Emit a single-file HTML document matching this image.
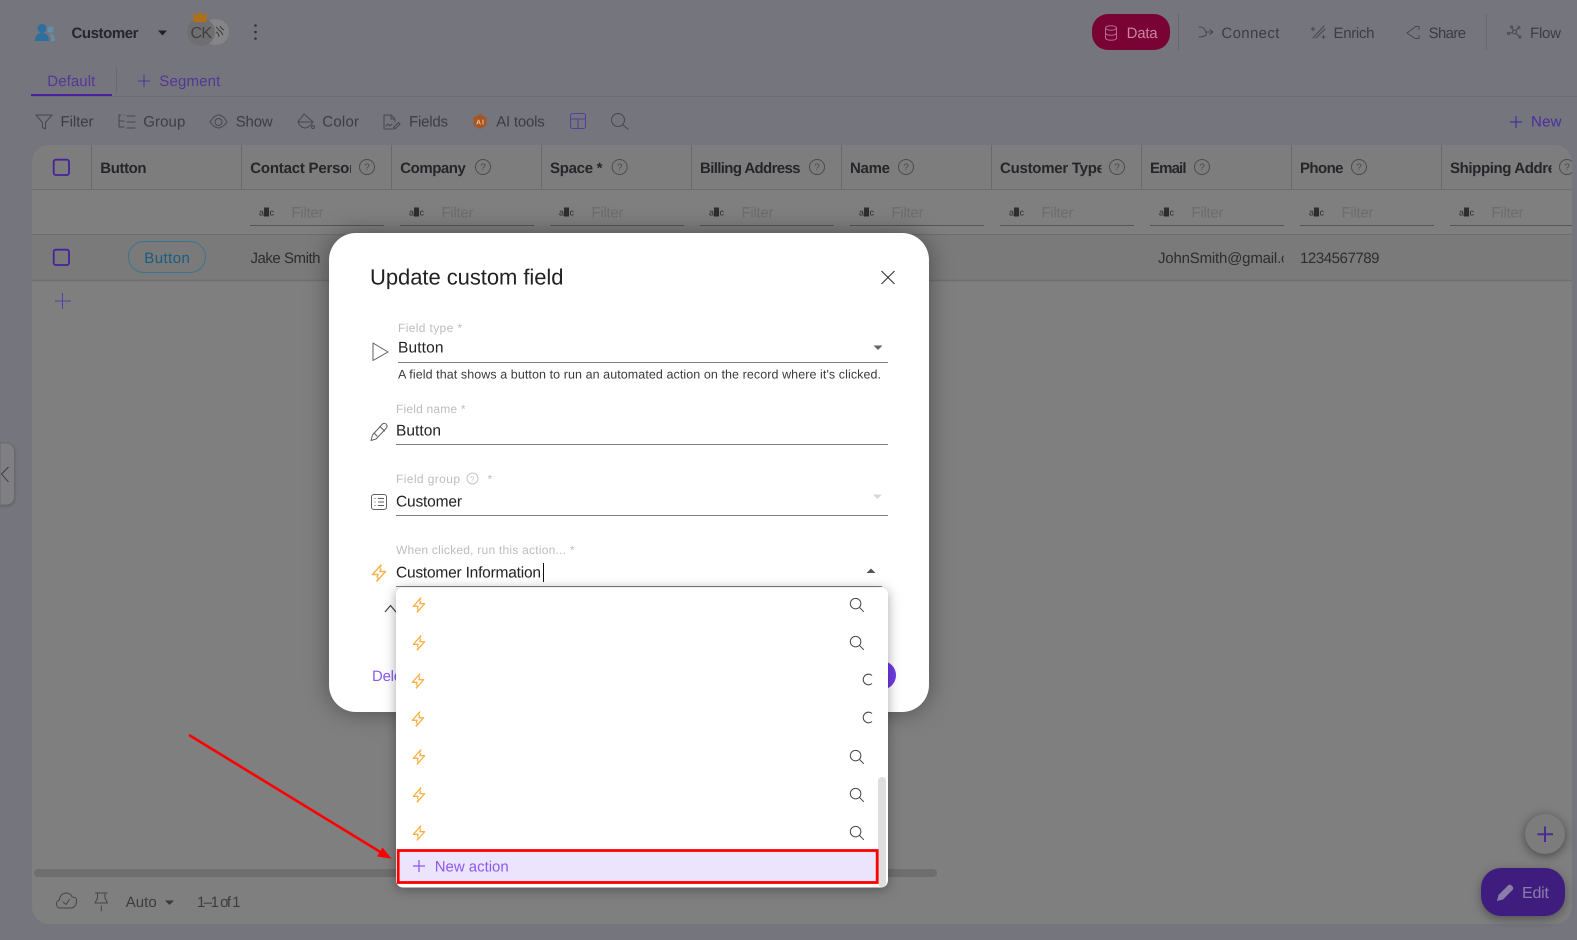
<!DOCTYPE html>
<html lang="en">
<head>
<meta charset="utf-8">
<title>Update custom field</title>
<style>
html,body{margin:0;padding:0;width:1577px;height:940px;overflow:hidden;background:#75757d}
svg{display:block}
text{font-family:"Liberation Sans",sans-serif;font-size:15px;fill:#3c3c41;text-rendering:geometricPrecision}
.b{font-weight:bold;fill:#26262a}
.f{fill:#6d6d6d}
.abc{font-size:9px;fill:#2a2a2a}
.l{font-size:12px;fill:#bdbdbd}
.v{fill:#222;font-size:15.500px}
.ic{fill:none;stroke:#47474c;stroke-width:1;stroke-linecap:round;stroke-linejoin:round}
.mi{fill:none;stroke:#5f5f5f;stroke-width:1;stroke-linecap:round;stroke-linejoin:round}
.h{fill:none;stroke:#4c4c50;stroke-width:1}
.ht{font-size:10px;fill:#4c4c50}
.bolt{fill:none;stroke:#f9b34c;stroke-width:1.500;stroke-linejoin:round;stroke-linecap:round}
</style>
</head>
<body>
<svg width="1577" height="940" viewBox="0 0 1577 940" xmlns="http://www.w3.org/2000/svg">
<defs>
<clipPath id="tb"><rect x="32" y="145" width="1540" height="779" rx="17"/></clipPath>
<symbol id="bolt" viewBox="0 0 16 18" overflow="visible"><path class="bolt" d="M10 1 1.500 10.500H7L6.200 13M6 17 14.500 7.500H9L9.800 5M10 1 8.700 3.800M6 17 7.300 14.200"/></symbol>
<symbol id="q" viewBox="0 0 16 16" overflow="visible"><circle cx="6.500" cy="6.500" r="5.600" fill="none" stroke="#4a4a4a" stroke-width="1.100"/><path d="M10.700 10.700 15 15" stroke="#4a4a4a" stroke-width="1.100" stroke-linecap="round"/></symbol>
</defs>

<!-- page background -->
<rect width="1577" height="940" fill="#75757d"/>

<!-- top bar -->
<circle cx="42" cy="28.500" r="4.500" fill="#2d6f9f"/><path d="M35 41c0-6 3-8 7-8s7 2 7 8z" fill="#2d6f9f"/>
<circle cx="50.500" cy="29.500" r="3.300" fill="#668ca8"/><path d="M50 34c3.500 0 5 2 5 7h-4c0-3-.5-5-1-7z" fill="#668ca8"/>
<text class="b" x="71.500" y="38" textLength="67" lengthAdjust="spacing">Customer</text>
<path d="M158 30.500h9l-4.500 5z" fill="#222"/>
<circle cx="216" cy="32" r="13" fill="#858587"/>
<circle cx="201" cy="32" r="14" fill="#6f6f72"/>
<text x="190.500" y="38" textLength="21.500" style="fill:#3f3f42;font-size:16px">CK</text>
<path d="M216 27c2 1 2 3 4 4s2 3 3 4M220 26c1 2 2 3 4 4M216 32c2 1 3 2 3 5" fill="none" stroke="#3f3f42" stroke-width="1.100"/>
<path d="M194 22l-1.500-9.500 4 3.500 3.500-5 3.500 5 4-3.500-1.500 9.500z" fill="#b0701a"/>
<circle cx="255.500" cy="25.500" r="1.300" fill="#333"/><circle cx="255.500" cy="32" r="1.300" fill="#333"/><circle cx="255.500" cy="38.500" r="1.300" fill="#333"/>

<rect x="1092" y="14" width="78" height="36" rx="16" fill="#7a0336"/>
<g fill="none" stroke="#b56c8c" stroke-width="1"><ellipse cx="1111" cy="28" rx="5.500" ry="2.200"/><path d="M1105.500 28v10c0 3 11 3 11 0V28M1105.500 33c0 3 11 3 11 0"/></g>
<text x="1126.600" y="38" textLength="31" style="fill:#c9859f">Data</text>
<path d="M1178.500 14v36M1486.500 14v36" stroke="#68686f"/>
<path class="ic" d="M1199 27c4 0 5 1 6 3 1 3 2 4 1 5-1 1-4 2-7 2M1206 32h7M1210 29.500l3 2.500-3 2.500" />
<text x="1221.400" y="38" textLength="58">Connect</text>
<path class="ic" d="M1313 38l11-12M1316 38l9-9M1311 29h4M1313 27v4M1322 37h3M1323.500 35.500v3"/>
<text x="1333.500" y="38" textLength="41">Enrich</text>
<path class="ic" d="M1407 33l8-6M1407 33l8 5.500M1415 26.500h4v3M1415 38.500h4v-3"/>
<text x="1428.600" y="38" textLength="37.500">Share</text>
<g class="ic"><circle cx="1514.500" cy="32" r="2"/><circle cx="1508.500" cy="33.500" r="1"/><circle cx="1511.500" cy="27" r="1"/><circle cx="1519" cy="27.500" r="1"/><circle cx="1520" cy="37" r="1"/><path d="M1509.500 33.300l3-.8M1512 28l1.500 2.500M1518.300 28.300l-2.500 2.300M1516 33.500l3.300 3"/></g>
<text x="1530" y="38" textLength="31">Flow</text>

<!-- tabs -->
<text x="47.300" y="86" textLength="48" style="fill:#553699">Default</text>
<rect x="31" y="94" width="81" height="2" fill="#48229a"/>
<path d="M116.500 68v24" stroke="#68686f"/>
<path d="M32 96.500H1577" stroke="#6c6c73"/>
<path d="M144 75v12M138 81h12" stroke="#553699" stroke-width="1.100"/>
<text x="159.300" y="86" textLength="61" style="fill:#553699">Segment</text>

<!-- toolbar -->
<path class="ic" d="M36 115h16l-6.500 7.500V129l-3-1.500-.2-5z"/>
<text x="60.500" y="126.700" textLength="33">Filter</text>
<path class="ic" d="M119 115v12h5M119 121h5M124 115h0M127 116h8M127 122h8M127 128h8M119 115h2"/>
<text x="143.300" y="126.700" textLength="42">Group</text>
<path class="ic" d="M210 122c3-5 6-7 8.500-7s6 2 8.500 7c-3 4-6 6-8.500 6s-5.500-2-8.500-6z"/><circle class="ic" cx="218.500" cy="122" r="3.500"/>
<text x="235.700" y="126.700" textLength="37">Show</text>
<path class="ic" d="M304 114l9 8c-2 3-5 6-8 6s-6-3-7-6c1-2 4-5 6-8zM298 122h15"/><circle class="ic" cx="313" cy="127" r="1.500"/>
<text x="322.300" y="126.700" textLength="36.700">Color</text>
<path class="ic" d="M384 115h7l4 4v3M384 115v14h9M391 115v4h4M386 126l2-2 2 2 2-2M395 129l5-5-1.500-1.500-5 5z"/>
<text x="409" y="126.700" textLength="39">Fields</text>
<path d="M480 114l6.500 3.700v7.600L480 129l-6.500-3.700v-7.600z" fill="#a8561f"/>
<text x="476" y="124.500" style="font-size:7px;font-weight:bold;fill:#e8c3a5" textLength="8">AI</text>
<text x="496.200" y="126.700" textLength="48.500">AI tools</text>
<g fill="none" stroke="#54419a" stroke-width="1.100"><rect x="570.500" y="113.500" width="15" height="15" rx="2"/><path d="M570.500 119h15M578 119v9.500"/></g>
<circle class="ic" cx="618" cy="120" r="6.500"/><path class="ic" d="M623 125l5 4"/>
<path d="M1516 116v12M1510 122h12" stroke="#48309e" stroke-width="1.200"/>
<text x="1531" y="126.500" textLength="30.500" style="fill:#4a2ea0">New</text>

<!-- table -->
<g clip-path="url(#tb)">
<rect x="32" y="145" width="1540" height="779" fill="#7f7f7f"/>
<rect x="32" y="145" width="1540" height="44" fill="#7d7d7d"/>
<rect x="32" y="235" width="1540" height="45" fill="#7a7a7a"/>
<path d="M32 189.500H1572M32 234.500H1572" stroke="#6e6e6e"/>
<path d="M32 280.500H1572" stroke="#6f6f6f" stroke-width="1.500"/>
<path d="M91.500 145v44M241.500 145v44M391.500 145v44M541.500 145v44M691.500 145v44M841.500 145v44M991.500 145v44M1141.500 145v44M1291.500 145v44M1441.500 145v44" stroke="#6a6a6a"/>
<rect x="53.700" y="159.700" width="15.300" height="15.300" rx="2" fill="none" stroke="#48229a" stroke-width="1.800"/>
<text class="b" x="100.300" y="173" textLength="46.300">Button</text>
<svg x="250" y="150" width="101" height="30"><text class="b" x=".3" y="23" textLength="108">Contact Person</text></svg>
<text class="b" x="400.300" y="173" textLength="65.500">Company</text>
<text class="b" x="550" y="173" textLength="52.500">Space *</text>
<text class="b" x="700" y="173" textLength="100.500">Billing Address</text>
<text class="b" x="850" y="173" textLength="40">Name</text>
<svg x="1000" y="150" width="101.500" height="30"><text class="b" x="0" y="23" textLength="105">Customer Type</text></svg>
<text class="b" x="1150" y="173" textLength="36.500">Email</text>
<text class="b" x="1300" y="173" textLength="43.500">Phone</text>
<svg x="1450" y="150" width="101.500" height="30"><text class="b" x="0" y="23" textLength="122">Shipping Address</text></svg>

<g class="h"><circle cx="367" cy="167" r="7.500"/><circle cx="483" cy="167" r="7.500"/><circle cx="619.600" cy="167" r="7.500"/><circle cx="817" cy="167" r="7.500"/><circle cx="906" cy="167" r="7.500"/><circle cx="1117" cy="167" r="7.500"/><circle cx="1202" cy="167" r="7.500"/><circle cx="1359" cy="167" r="7.500"/><circle cx="1567" cy="167" r="7.500"/></g>
<text class="ht" x="364.300" y="170.500">?</text><text class="ht" x="480.300" y="170.500">?</text><text class="ht" x="616.900" y="170.500">?</text><text class="ht" x="814.300" y="170.500">?</text><text class="ht" x="903.300" y="170.500">?</text><text class="ht" x="1114.300" y="170.500">?</text><text class="ht" x="1199.300" y="170.500">?</text><text class="ht" x="1356.300" y="170.500">?</text><text class="ht" x="1564.300" y="170.500">?</text>

<!-- filter row -->
<path d="M250 225.500h134M400 225.500h134M550 225.500h134M700 225.500h134M850 225.500h134M1000 225.500h134M1150 225.500h134M1300 225.500h134M1450 225.500h134" stroke="#565656" stroke-width="1.100"/>
<g fill="#2f2f2f"><rect x="264" y="207.500" width="5" height="9"/><rect x="414" y="207.500" width="5" height="9"/><rect x="564" y="207.500" width="5" height="9"/><rect x="714" y="207.500" width="5" height="9"/><rect x="864" y="207.500" width="5" height="9"/><rect x="1014" y="207.500" width="5" height="9"/><rect x="1164" y="207.500" width="5" height="9"/><rect x="1314" y="207.500" width="5" height="9"/><rect x="1464" y="207.500" width="5" height="9"/></g>
<text class="abc" x="259" y="215.500" textLength="15">abc</text><text class="abc" x="409" y="215.500" textLength="15">abc</text><text class="abc" x="559" y="215.500" textLength="15">abc</text><text class="abc" x="709" y="215.500" textLength="15">abc</text><text class="abc" x="859" y="215.500" textLength="15">abc</text><text class="abc" x="1009" y="215.500" textLength="15">abc</text><text class="abc" x="1159" y="215.500" textLength="15">abc</text><text class="abc" x="1309" y="215.500" textLength="15">abc</text><text class="abc" x="1459" y="215.500" textLength="15">abc</text>
<text class="f" x="291.500" y="217.700" textLength="32">Filter</text><text class="f" x="441.500" y="217.700" textLength="32">Filter</text><text class="f" x="591.500" y="217.700" textLength="32">Filter</text><text class="f" x="741.500" y="217.700" textLength="32">Filter</text><text class="f" x="891.500" y="217.700" textLength="32">Filter</text><text class="f" x="1041.500" y="217.700" textLength="32">Filter</text><text class="f" x="1191.500" y="217.700" textLength="32">Filter</text><text class="f" x="1341.500" y="217.700" textLength="32">Filter</text><text class="f" x="1491.500" y="217.700" textLength="32">Filter</text>

<!-- data row -->
<rect x="53.700" y="249.700" width="15.300" height="15.300" rx="2" fill="none" stroke="#48229a" stroke-width="1.800"/>
<rect x="128.500" y="241.500" width="77" height="31" rx="15.500" fill="none" stroke="#3a7590"/>
<text x="144.300" y="263" textLength="45.500" style="fill:#1a5c80">Button</text>
<text x="250.500" y="263" textLength="70" style="fill:#2e2e2e">Jake Smith</text>
<svg x="1158" y="245" width="125.500" height="30"><text x="0" y="17.800" textLength="151" style="fill:#2e2e2e">JohnSmith@gmail.com</text></svg>
<text x="1300" y="262.800" textLength="79.500" style="fill:#2e2e2e">1234567789</text>
<path d="M62.500 293v16M55 301h16" stroke="#5a3ea8" stroke-width="1"/>

<!-- table footer -->
<rect x="34" y="869" width="903" height="8" rx="4" fill="#6e6e6e"/>
<path class="mi" style="stroke:#454545" d="M60.500 908c-5 0-5.500-7-1-8 0-4 3-7 7-7 3 0 5 2 5.500 4 4 0 5 2 4.500 5-.5 4-3 6-5 6z"/><path class="mi" style="stroke:#454545" d="M63 902l3 2.500 3.500-5"/>
<path class="mi" style="stroke:#454545" d="M95.500 893h11.500M97.500 893v5l-2.500 5h12.500l-2.500-5v-5M101.300 906v5"/>
<text x="125.700" y="907" textLength="31">Auto</text>
<path d="M165 900.500h9l-4.500 4.500z" fill="#3a3a3a"/>
<text x="197" y="907" textLength="43.500">1–1 of 1</text>
</g>

<!-- left collapse handle -->
<path d="M0 443h6.500a8 8 0 0 1 8 8v46a8 8 0 0 1-8 8H0z" fill="#808084" stroke="#6a6a6e" style="filter:drop-shadow(0 1px 1px rgba(0,0,0,.2))"/>
<path d="M8.500 467l-7 7 7 8" fill="none" stroke="#38383b" stroke-width=".9"/>

<!-- FABs -->
<circle cx="1545" cy="834" r="20" fill="#7c7c7c" style="filter:drop-shadow(0 2px 5px rgba(0,0,0,.45))"/>
<path d="M1545 826.500v15.500M1537.500 834.300h15.500" stroke="#4c2a94" stroke-width="2"/>
<rect x="1481" y="868" width="84" height="48" rx="20" fill="#3f1d7e" style="filter:drop-shadow(0 3px 5px rgba(0,0,0,.35))"/>
<path d="M1497 901l1.500-6 9.500-9.500a2.500 2.500 0 0 1 3.500 0l1 1a2.500 2.500 0 0 1 0 3.500l-9.500 9.500z" fill="#8a7da8"/>
<text x="1522" y="898" textLength="27" style="fill:#8a7da8;font-size:16px">Edit</text>

<!-- modal -->
<rect x="329" y="233" width="600" height="479" rx="27" fill="#fff" style="filter:drop-shadow(0 0 12px rgba(0,0,0,.38))"/>
<text x="370" y="284.500" textLength="193.500" style="font-size:22px;fill:#222">Update custom field</text>
<path d="M881.500 271l13 13M894.500 271l-13 13" stroke="#333" stroke-width="1.100" fill="none"/>

<path class="mi" d="M373 343l15 9-15 8.500z"/>
<text class="l" x="398" y="332" textLength="64">Field type *</text>
<text class="v" x="398" y="352.700" textLength="45.500">Button</text>
<path d="M873.500 345.500h9l-4.500 4.500z" fill="#666"/>
<path d="M398 362.500H888" stroke="#808080"/>
<text x="398" y="378.700" textLength="483" style="font-size:12.500px;fill:#3a3a3a">A field that shows a button to run an automated action on the record where it's clicked.</text>

<path class="mi" d="M371 440.500l1.500-5.500 10-11c1-1 3-1 4 .5s.5 3-.5 4l-10 10.500zM380 426.500l4.500 4.500M374 433l3 3"/>
<text class="l" x="396" y="413" textLength="69.500">Field name *</text>
<text class="v" x="396" y="435.700" textLength="45">Button</text>
<path d="M396 444.500H888" stroke="#808080"/>

<rect x="371.500" y="494.500" width="15" height="15" rx="2.500" fill="none" stroke="#5f5f5f"/>
<path d="M374.500 498.500h1M374.500 502h1M374.500 505.500h1M378 498.500h6M378 502h6M378 505.500h6" stroke="#5f5f5f"/>
<text class="l" x="396" y="483" textLength="64">Field group</text>
<circle cx="472.500" cy="478.500" r="5.500" fill="none" stroke="#c5c5c5"/>
<text x="470" y="482" style="font-size:8px;fill:#c5c5c5">?</text>
<text class="l" x="487.500" y="483">*</text>
<text class="v" x="396" y="506.700" textLength="66">Customer</text>
<path d="M873 494.500h9l-4.500 4.500z" fill="#d8d8d8"/>
<path d="M396 515.500H888" stroke="#808080"/>

<use href="#bolt" x="371" y="564" width="16" height="18"/>
<text class="l" x="396" y="554" textLength="178.500">When clicked, run this action... *</text>
<text class="v" x="396" y="577.500" textLength="145">Customer Information</text>
<path d="M543.500 563v19" stroke="#111"/>
<path d="M866.500 573h9l-4.500-4.500z" fill="#555"/>
<path d="M396 586.500H882" stroke="#808080"/>

<path d="M385 612l5.500-6.500 5.500 6.500" fill="none" stroke="#444" stroke-width="1.200"/>
<text x="372" y="681" textLength="42" style="fill:#8a5bf0">Delete</text>
<rect x="820" y="661" width="76" height="28.500" rx="14.250" fill="#6f3be8"/>

<!-- dropdown -->
<rect x="396" y="587.500" width="492" height="300" rx="7" fill="#fff" style="filter:drop-shadow(0 2px 6px rgba(0,0,0,.35))"/>
<use href="#bolt" x="412" y="597" width="14" height="16"/>
<use href="#bolt" x="412" y="635" width="14" height="16"/>
<use href="#bolt" x="411" y="673" width="14" height="16"/>
<use href="#bolt" x="411" y="711" width="14" height="16"/>
<use href="#bolt" x="412" y="749" width="14" height="16"/>
<use href="#bolt" x="412" y="787" width="14" height="16"/>
<use href="#bolt" x="412" y="825" width="14" height="16"/>
<use href="#q" x="849.500" y="597.500" width="15" height="15"/>
<use href="#q" x="849.500" y="635.500" width="15" height="15"/>
<use href="#q" x="849.500" y="749.500" width="15" height="15"/>
<use href="#q" x="849.500" y="787.500" width="15" height="15"/>
<use href="#q" x="849.500" y="825.500" width="15" height="15"/>
<path d="M872 675.500A5.300 5.300 0 1 0 872 683.500M872 713.500A5.300 5.300 0 1 0 872 721.500" fill="none" stroke="#4a4a4a" stroke-width="1.100"/>
<rect x="878" y="777" width="8" height="110" rx="4" fill="#dedede"/>
<rect x="398.200" y="850.500" width="479" height="32" fill="#ece4fd" stroke="#f00" stroke-width="2.800"/>
<path d="M419 860v12M413 866h12" stroke="#8a5bf0" stroke-width="1.300"/>
<text x="434.700" y="871.500" textLength="74" style="fill:#8a5bf0">New action</text>

<!-- red arrow -->
<path d="M189 735 382 853" stroke="#f00" stroke-width="2.600" fill="none"/>
<path d="M391.700 858.700l-14.700-2.200 5.500-9z" fill="#f00"/>
</svg>
</body>
</html>
